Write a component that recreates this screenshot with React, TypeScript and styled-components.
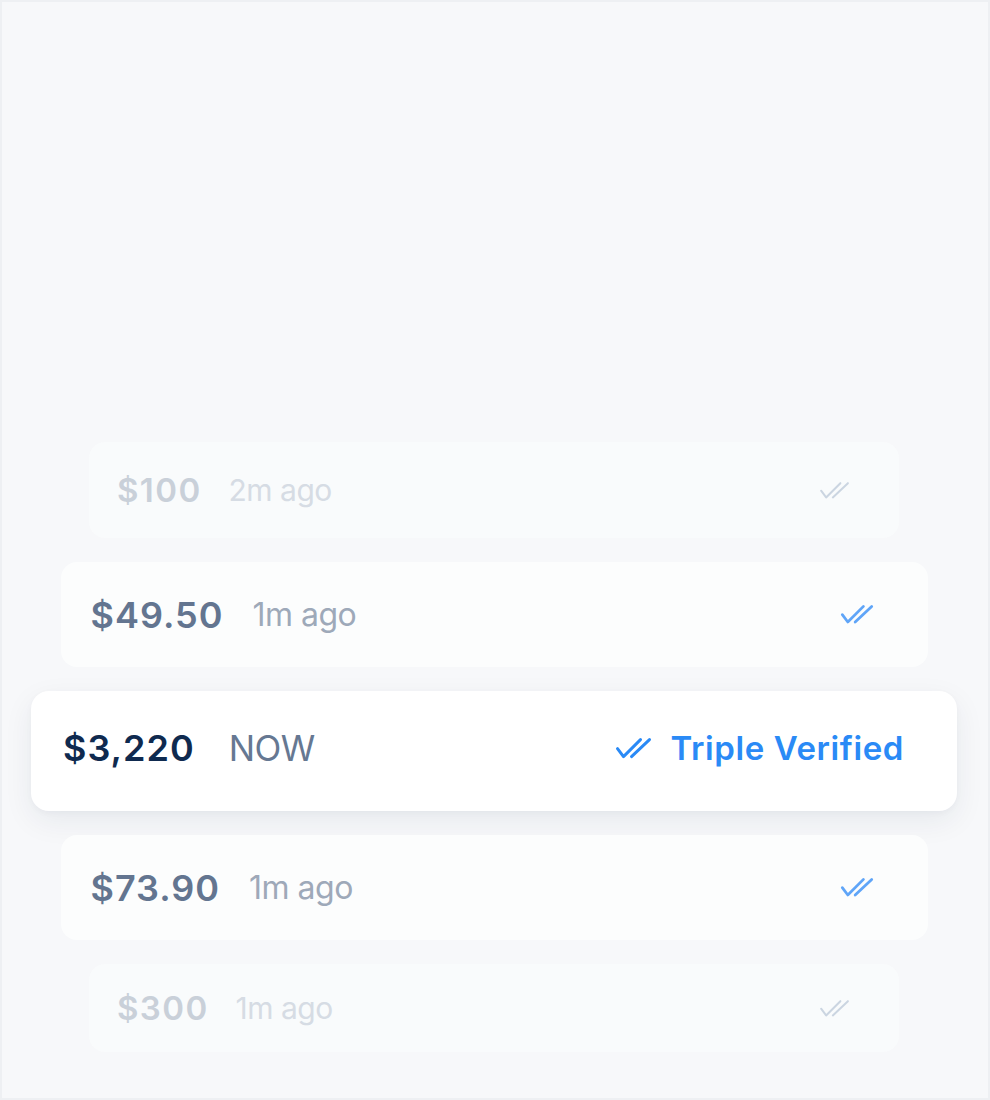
import React from 'react'
import styled, { createGlobalStyle, css } from 'styled-components'

type Depth = 'far' | 'near' | 'hero'

interface Entry {
  amount: string
  time: string
  depth: Depth
  verified?: boolean
  short?: boolean
}

const entries: Entry[] = [
  { amount: '$100', time: '2m ago', depth: 'far' },
  { amount: '$49.50', time: '1m ago', depth: 'near' },
  { amount: '$3,220', time: 'NOW', depth: 'hero', verified: true },
  { amount: '$73.90', time: '1m ago', depth: 'near' },
  { amount: '$300', time: '1m ago', depth: 'far', short: true },
]

const GlobalStyle = createGlobalStyle`
  * {
    box-sizing: border-box;
  }
  body {
    margin: 0;
    font-family: Inter, 'Noto Sans', sans-serif;
  }
`

const Frame = styled.div`
  width: 990px;
  height: 1100px;
  border: 2px solid #eef0f3;
  background: #f7f8fa;
  display: flex;
  flex-direction: column;
  align-items: center;
  justify-content: flex-end;
  gap: 24px;
  padding-bottom: 46px;
  padding-right: 2px;
`

const cardSizes = {
  far: css`
    width: 810px;
    height: 96px;
    padding: 0 49px 0 28px;
    border-radius: 16px;
    background: rgba(252, 253, 253, 0.55);
  `,
  near: css`
    width: 867px;
    height: 105px;
    padding: 0 54px 0 30px;
    border-radius: 16px;
    background: #fcfdfd;
  `,
  hero: css`
    width: 926px;
    height: 120px;
    padding: 0 53px 6px 32px;
    border-radius: 18px;
    background: #ffffff;
    box-shadow: 0 10px 30px rgba(16, 40, 74, 0.07), 0 2px 6px rgba(16, 40, 74, 0.03);
  `,
}

const Card = styled.div<{ $depth: Depth; $short?: boolean }>`
  display: flex;
  align-items: center;
  flex-shrink: 0;
  ${(p) => cardSizes[p.$depth]}
  ${(p) => p.$short && 'height: 88px;'}
`

const amountColor = { far: '#c9d0d9', near: '#637590', hero: '#0f2a4f' }
const timeColor = { far: '#d6dce4', near: '#9ea9b9', hero: '#667892' }
const iconColor = { far: '#cbd5e1', near: '#5fa5f8', hero: '#2a8af6' }

const Amount = styled.span<{ $depth: Depth }>`
  font-size: ${(p) => (p.$depth === 'far' ? 33 : 36)}px;
  font-weight: 600;
  letter-spacing: ${(p) => (p.$depth === 'far' ? 1.4 : 1)}px;
  color: ${(p) => amountColor[p.$depth]};
  line-height: 1;
`

const Time = styled.span<{ $depth: Depth }>`
  margin-left: ${(p) => (p.$depth === 'hero' ? 34 : p.$depth === 'near' ? 29 : 27)}px;
  font-size: ${(p) => (p.$depth === 'hero' ? 35 : p.$depth === 'near' ? 32 : 30)}px;
  font-weight: 400;
  letter-spacing: -0.5px;
  color: ${(p) => timeColor[p.$depth]};
  line-height: 1;
`

const Status = styled.div`
  margin-left: auto;
  display: flex;
  align-items: center;
  gap: 19px;
`

const StatusLabel = styled.span`
  font-size: 33px;
  font-weight: 600;
  letter-spacing: 0.6px;
  color: #2a8af6;
  line-height: 1;
`

const Ticks = ({ depth }: { depth: Depth }) => {
  const w = depth === 'hero' ? 37 : depth === 'near' ? 34 : 31
  return (
    <svg
      width={w}
      height={w * 0.6}
      viewBox="0 0 37 22"
      fill="none"
      stroke={iconColor[depth]}
      strokeWidth={depth === 'far' ? 2.4 : 3}
      strokeLinecap="round"
      strokeLinejoin="round"
    >
      <path d="M2.5 11.5 L8.5 19.5 L25.5 2.5" />
      <path d="M16.5 19.5 L34.5 2.5" />
    </svg>
  )
}

const Row = ({ entry }: { entry: Entry }) => (
  <Card $depth={entry.depth} $short={entry.short}>
    <Amount $depth={entry.depth}>{entry.amount}</Amount>
    <Time $depth={entry.depth}>{entry.time}</Time>
    <Status>
      <Ticks depth={entry.depth} />
      {entry.verified && <StatusLabel>Triple Verified</StatusLabel>}
    </Status>
  </Card>
)

export default function App() {
  return (
    <>
      <GlobalStyle />
      <Frame>
        {entries.map((entry, i) => (
          <Row key={i} entry={entry} />
        ))}
      </Frame>
    </>
  )
}
